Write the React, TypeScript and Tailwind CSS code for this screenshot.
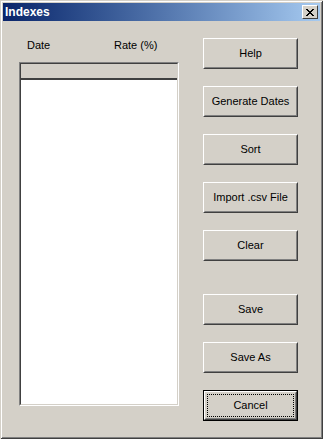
import React from 'react';

const btnFace = 'bg-[#d4d0c8]';

const ClassicButton: React.FC<{ label: string; className?: string; isDefault?: boolean }> = ({
  label,
  className = '',
  isDefault = false,
}) => {
  if (isDefault) {
    return (
      <div className={`w-[95px] h-[31px] border border-black ${className}`}>
        <div className="w-full h-full border border-t-white border-l-white border-r-[#404040] border-b-[#404040]">
          <div className="w-full h-full border border-t-[#d4d0c8] border-l-[#d4d0c8] border-r-[#808080] border-b-[#808080] p-[1px]">
            <div className="w-full h-full border border-dotted border-black flex items-center justify-center text-[11px] text-black leading-none">
              {label}
            </div>
          </div>
        </div>
      </div>
    );
  }
  return (
    <div
      className={`w-[95px] h-[31px] ${btnFace} border border-t-white border-l-white border-r-[#404040] border-b-[#404040] ${className}`}
    >
      <div className="w-full h-full border border-t-[#d4d0c8] border-l-[#d4d0c8] border-r-[#808080] border-b-[#808080] flex items-center justify-center text-[11px] text-black leading-none">
        {label}
      </div>
    </div>
  );
};

export default function App() {
  return (
    <div className="w-[323px] h-[439px] bg-[#d4d0c8] p-[3px] flex flex-col font-['Liberation_Sans',Arial,sans-serif] shadow-[inset_1px_1px_#d4d0c8,inset_-1px_-1px_#404040,inset_2px_2px_#ffffff,inset_-2px_-2px_#808080]">
      {/* Title bar */}
      <div className="h-[18px] flex items-center justify-between pl-[2px] pr-[2px] bg-gradient-to-r from-[#0a246a] to-[#a6caf0]">
        <span className="text-white font-bold text-[12px] leading-none">Indexes</span>
        <div className="w-[16px] h-[14px] bg-[#d4d0c8] border border-t-white border-l-white border-r-[#404040] border-b-[#404040] flex items-center justify-center">
          <svg width="8" height="7" viewBox="0 0 8 7">
            <path d="M0 0h2v1h-2zM6 0h2v1h-2zM1 1h2v1h-2zM5 1h2v1h-2zM2 2h4v1h-4zM3 3h2v1h-2zM2 4h4v1h-4zM1 5h2v1h-2zM5 5h2v1h-2zM0 6h2v1h-2zM6 6h2v1h-2z" fill="#000" />
          </svg>
        </div>
      </div>

      {/* Body */}
      <div className="flex flex-1">
        {/* Left: list */}
        <div className="ml-[16px] w-[160px] flex flex-col">
          <div className="pt-[17px] h-[31px] flex text-[11px] leading-[14px] text-black pl-[8px]">
            <span className="w-[87px]">Date</span>
            <span>Rate (%)</span>
          </div>
          <div className="mt-[10px] h-[344px] border border-t-[#808080] border-l-[#808080] border-r-white border-b-white">
            <div className="w-full h-full border border-t-[#404040] border-l-[#404040] border-r-[#d4d0c8] border-b-[#d4d0c8] flex flex-col bg-white">
              <div className="h-[16px] bg-[#d4d0c8] border-b-2 border-[#404040]" />
              <div className="flex-1 bg-white" />
            </div>
          </div>
        </div>

        {/* Right: buttons */}
        <div className="ml-[24px] flex flex-col pt-[17px]">
          <ClassicButton label="Help" />
          <ClassicButton label="Generate Dates" className="mt-[17px]" />
          <ClassicButton label="Sort" className="mt-[17px]" />
          <ClassicButton label="Import .csv File" className="mt-[17px]" />
          <ClassicButton label="Clear" className="mt-[17px]" />
          <ClassicButton label="Save" className="mt-[33px]" />
          <ClassicButton label="Save As" className="mt-[17px]" />
          <ClassicButton label="Cancel" className="mt-[17px]" isDefault />
        </div>
      </div>
    </div>
  );
}
